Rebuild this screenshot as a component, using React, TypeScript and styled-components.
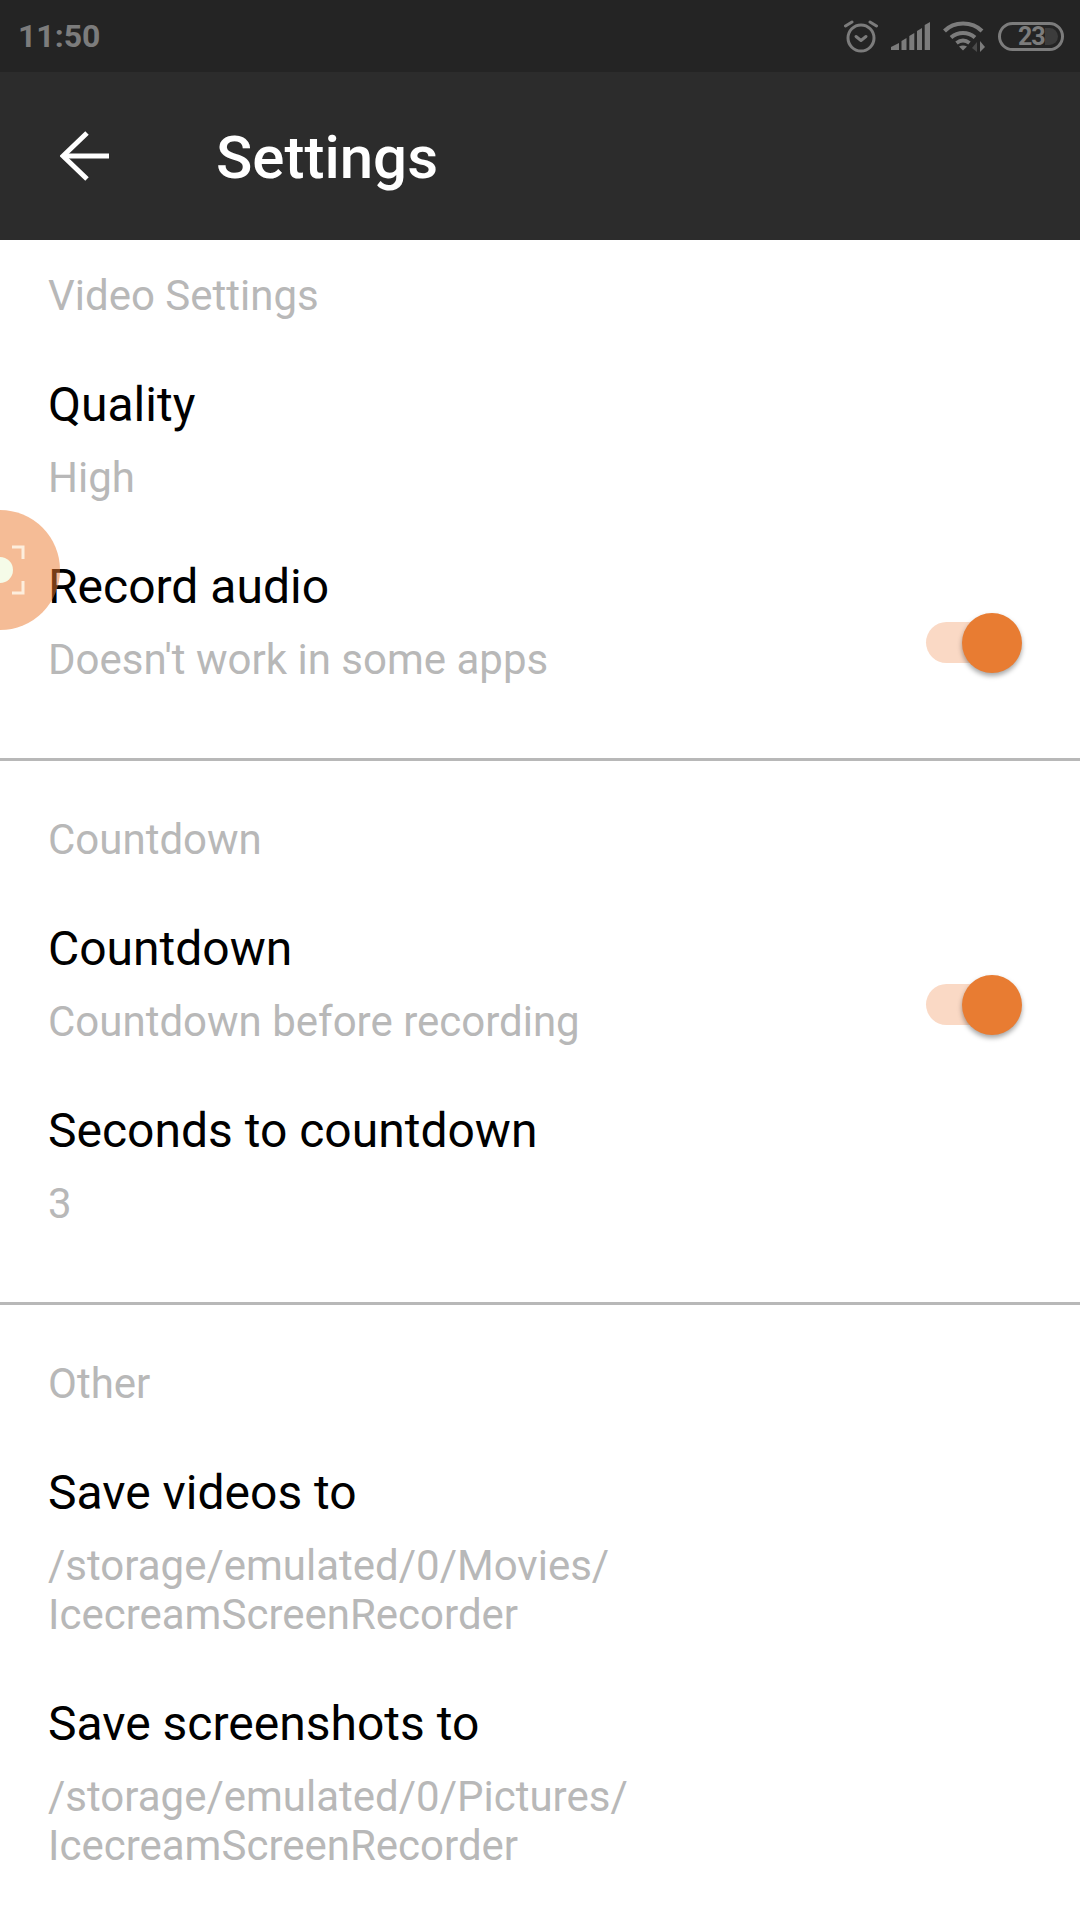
import React from 'react'
import styled, { createGlobalStyle } from 'styled-components'

const Global = createGlobalStyle`
  html, body {
    margin: 0;
    padding: 0;
    background: #fff;
  }
  body {
    font-family: Roboto, "Liberation Sans", sans-serif;
  }
`

const Page = styled.div`
  position: relative;
  width: 1080px;
  height: 1920px;
  overflow: hidden;
  background: #fff;
`

const StatusBar = styled.div`
  height: 72px;
  background: #242424;
  display: flex;
  align-items: center;
  justify-content: space-between;
  padding: 0 16px 0 18px;
  box-sizing: border-box;
`

const Time = styled.span`
  font-size: 32px;
  font-weight: 700;
  color: #7c7c7c;
`

const StatusIcons = styled.div`
  display: flex;
  align-items: center;
  gap: 13px;
`

const Toolbar = styled.div`
  height: 168px;
  background: #2c2c2c;
  display: flex;
  align-items: center;
  padding-left: 60px;
  gap: 106px;
`

const Title = styled.h1`
  margin: 0;
  padding-top: 3px;
  font-size: 60px;
  font-weight: 500;
  color: #fff;
`

const Section = styled.section<{ $first?: boolean; $last?: boolean }>`
  padding: ${({ $first }) => ($first ? 0 : 23)}px 0 49px;
  border-bottom: ${({ $last }) => ($last ? 'none' : '3px solid #b8b8b8')};
`

const Header = styled.div`
  padding: 31px 48px 24px;
  font-size: 42px;
  line-height: 50px;
  color: #b8b8b8;
`

const Row = styled.div`
  display: flex;
  align-items: center;
  justify-content: space-between;
  padding: 28px 58px 25px 48px;
`

const RowText = styled.div`
  display: flex;
  flex-direction: column;
  gap: 16px;
`

const RowTitle = styled.div`
  font-size: 48px;
  line-height: 64px;
  color: #000;
`

const Summary = styled.div`
  font-size: 42px;
  line-height: 49px;
  color: #b8b8b8;
`

const SwitchBox = styled.div`
  position: relative;
  width: 96px;
  height: 60px;
  margin-top: 46px;
`

const Track = styled.div`
  position: absolute;
  left: 0;
  top: 9px;
  width: 84px;
  height: 41px;
  border-radius: 21px;
  background: #fad9c5;
`

const Knob = styled.div`
  position: absolute;
  right: 0;
  top: 0;
  width: 60px;
  height: 60px;
  border-radius: 50%;
  background: #e87c32;
  box-shadow: 0 3px 5px rgba(0, 0, 0, 0.35);
`

const Floating = styled.div`
  position: absolute;
  left: -60px;
  top: 510px;
  width: 120px;
  height: 120px;
  border-radius: 50%;
  background: rgba(236, 122, 46, 0.5);
`

const FloatingMark = styled.svg`
  position: absolute;
  left: 60px;
  top: 0;
`

const Switch = () => (
  <SwitchBox>
    <Track />
    <Knob />
  </SwitchBox>
)

const AlarmIcon = () => (
  <svg width="34" height="34" viewBox="0 0 34 34" fill="none" stroke="#7c7c7c" strokeWidth="3" strokeLinecap="round" strokeLinejoin="round">
    <circle cx="17" cy="19" r="13" />
    <path d="M12 17.5l5 4 5-4" />
    <path d="M1.5 7l6.5-4M32.5 7l-6.5-4" />
  </svg>
)

const SignalIcon = () => (
  <svg width="39" height="28" viewBox="0 0 39 28" fill="#7c7c7c">
    <path d="M0 28v-3l8-4v7z" />
    <path d="M10.5 28V19l5-3v12z" />
    <path d="M18.3 28V14l5-3v17z" />
    <path d="M26 28V9l5-3v22z" />
    <path d="M33.7 28V3l5.3-3v28z" />
  </svg>
)

const WifiIcon = () => (
  <svg width="42" height="32" viewBox="0 0 42 32" fill="none" stroke="#7c7c7c" strokeWidth="4">
    <path d="M1.5 11C11 1 29 1 39 11" />
    <path d="M8 17.5c7-6 17-6 24 0" />
    <path d="M13.5 23c4-3 9-3 13 0" />
    <path d="M20 30.5l-4-4c2.5-1.5 5.5-1.5 8 0z" fill="#7c7c7c" stroke="none" />
    <path d="M34 22v10l-5-4z" fill="#4a4a4a" stroke="none" />
    <path d="M37 32V21l5 6z" fill="#7c7c7c" stroke="none" />
  </svg>
)

const BatteryBox = styled.div`
  position: relative;
  width: 66px;
  height: 29px;
  box-sizing: border-box;
  border: 3px solid #7c7c7c;
  border-radius: 15px;
  display: flex;
  align-items: center;
  padding-left: 17px;
`

const BatteryText = styled.span`
  font-size: 25px;
  font-weight: 700;
  letter-spacing: -1px;
  color: #7c7c7c;
`

const BatteryRest = styled.div`
  position: absolute;
  right: 3px;
  top: 3px;
  width: 13px;
  height: 17px;
  border-radius: 0 9px 9px 0;
  background: #3c3c3c;
`

const BackIcon = () => (
  <svg width="50" height="50" viewBox="0 0 50 50" fill="none" stroke="#fff" strokeWidth="5">
    <path d="M49 25H4" />
    <path d="M27 2L3 25l24 23" />
  </svg>
)

export default function App() {
  return (
    <Page>
      <Global />
      <StatusBar>
        <Time>11:50</Time>
        <StatusIcons>
          <AlarmIcon />
          <SignalIcon />
          <WifiIcon />
          <BatteryBox>
            <BatteryText>23</BatteryText>
            <BatteryRest />
          </BatteryBox>
        </StatusIcons>
      </StatusBar>
      <Toolbar>
        <BackIcon />
        <Title>Settings</Title>
      </Toolbar>

      <Section $first>
        <Header>Video Settings</Header>
        <Row>
          <RowText>
            <RowTitle>Quality</RowTitle>
            <Summary>High</Summary>
          </RowText>
        </Row>
        <Row>
          <RowText>
            <RowTitle>Record audio</RowTitle>
            <Summary>Doesn't work in some apps</Summary>
          </RowText>
          <Switch />
        </Row>
      </Section>

      <Section>
        <Header>Countdown</Header>
        <Row>
          <RowText>
            <RowTitle>Countdown</RowTitle>
            <Summary>Countdown before recording</Summary>
          </RowText>
          <Switch />
        </Row>
        <Row>
          <RowText>
            <RowTitle>Seconds to countdown</RowTitle>
            <Summary>3</Summary>
          </RowText>
        </Row>
      </Section>

      <Section $last>
        <Header>Other</Header>
        <Row>
          <RowText>
            <RowTitle>Save videos to</RowTitle>
            <Summary>/storage/emulated/0/Movies/<br />IcecreamScreenRecorder</Summary>
          </RowText>
        </Row>
        <Row>
          <RowText>
            <RowTitle>Save screenshots to</RowTitle>
            <Summary>/storage/emulated/0/Pictures/<br />IcecreamScreenRecorder</Summary>
          </RowText>
        </Row>
      </Section>

      <Floating>
        <FloatingMark width="30" height="120" viewBox="0 0 30 120" fill="none">
          <circle cx="0" cy="60" r="13" fill="#f5fbe8" stroke="none" />
          <path d="M12 37h11v12M12 83h11V71" stroke="#fdeedd" strokeWidth="3" />
        </FloatingMark>
      </Floating>
    </Page>
  )
}
